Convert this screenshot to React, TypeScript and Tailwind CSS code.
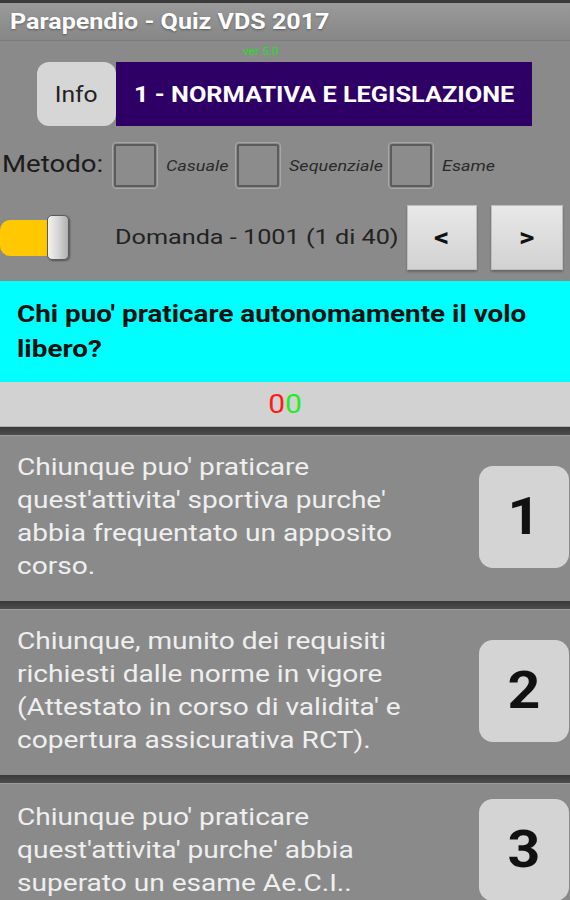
import React from "react";

const answers = [
  {
    n: "1",
    lines: ["Chiunque puo' praticare", "quest'attivita' sportiva purche'", "abbia frequentato un apposito", "corso."],
  },
  {
    n: "2",
    lines: ["Chiunque, munito dei requisiti", "richiesti dalle norme in vigore", "(Attestato in corso di validita' e", "copertura assicurativa RCT)."],
  },
  {
    n: "3",
    lines: ["Chiunque puo' praticare", "quest'attivita' purche' abbia", "superato un esame Ae.C.I.."],
  },
];

function Check() {
  return (
    <div className="w-[46px] h-[47px] shrink-0 rounded-[4px] border border-[#a8a8a8] p-[1px]">
      <div className="w-full h-full border-2 border-[#5c5c5c] rounded-[2px] bg-[#8c8c8c]" />
    </div>
  );
}

function Separator() {
  return (
    <div>
      <div className="h-[8px] bg-gradient-to-b from-[#3a3a3a] to-[#4c4c4c]" />
      <div className="h-[1px] bg-[#9c9c9c]" />
    </div>
  );
}

export default function App() {
  return (
    <div
      className="w-[570px] h-[900px] overflow-hidden bg-[#8a8a8a]"
      style={{ fontFamily: "Roboto, 'Noto Sans', sans-serif" }}
    >
      <div className="h-[3px] bg-[#3a3a3a]" />
      <div className="h-[38px] bg-gradient-to-b from-[#9a9a9a] to-[#878787] flex items-center pl-[10px] border-b border-[#7c7c7c]">
        <span className="inline-block origin-left scale-x-[1.14] text-white font-bold text-[22px] leading-none [text-shadow:0_1px_2px_rgba(0,0,0,0.35)]">
          Parapendio - Quiz VDS 2017
        </span>
      </div>
      <div className="h-[21px] flex items-center pl-[243px]">
        <span className="inline-block origin-left scale-x-[1.2] text-[10px] text-[#22e022] leading-none mt-[1px]">ver 5.0</span>
      </div>
      <div className="flex pl-[37px] h-[64px]">
        <div className="w-[79px] h-[64px] rounded-[12px] bg-[#d6d6d6] flex items-center justify-center text-[#222]">
          <span className="inline-block scale-x-[1.12] text-[22px]">Info</span>
        </div>
        <div className="w-[416px] h-[64px] bg-[#2e0066] flex items-center pl-[18px] text-white font-bold text-[22px]">
          <span className="inline-block origin-left scale-x-[1.15] whitespace-nowrap">1 - NORMATIVA E LEGISLAZIONE</span>
        </div>
      </div>
      <div className="flex items-center h-[47px] mt-[16px]">
        <span className="w-[110px] shrink-0 ml-[2px]">
          <span className="inline-block origin-left scale-x-[1.2] text-[23px] text-[#1c1c1c]">Metodo:</span>
        </span>
        <Check />
        <span className="ml-[8px] w-[69px] shrink-0">
          <span className="inline-block origin-left scale-x-[1.2] italic text-[15px] text-[#2a2a2a]">Casuale</span>
        </span>
        <Check />
        <span className="ml-[8px] w-[99px] shrink-0">
          <span className="inline-block origin-left scale-x-[1.2] italic text-[15px] text-[#2a2a2a]">Sequenziale</span>
        </span>
        <Check />
        <span className="ml-[8px]">
          <span className="inline-block origin-left scale-x-[1.2] italic text-[15px] text-[#2a2a2a]">Esame</span>
        </span>
      </div>
      <div className="flex items-center h-[65px] mt-[16px]">
        <div className="relative w-[70px] h-[45px] flex items-center shrink-0">
          <div className="w-[52px] h-[36px] bg-[#ffc800] rounded-l-[10px]" />
          <div className="absolute left-[47px] top-0 w-[22px] h-[45px] rounded-[5px] border border-[#5a5a5a] bg-gradient-to-r from-[#f2f2f2] via-[#d6d6d6] to-[#b0b0b0] shadow-[1px_1px_2px_rgba(0,0,0,0.4)]" />
        </div>
        <span className="ml-[45px] w-[292px] shrink-0">
          <span className="inline-block origin-left scale-x-[1.2] text-[21px] text-[#222] whitespace-nowrap">
            Domanda - 1001 (1 di 40)
          </span>
        </span>
        <div className="w-[70px] h-[65px] shrink-0 bg-gradient-to-b from-[#e8e8e8] to-[#d2d2d2] border border-[#bdbdbd] shadow-[0_2px_2px_rgba(0,0,0,0.25)] flex items-center justify-center text-[26px] font-bold text-[#111]">
          <span className="inline-block scale-x-[1.15]">&lt;</span>
        </div>
        <div className="w-[72px] h-[65px] shrink-0 ml-[14px] bg-gradient-to-b from-[#e8e8e8] to-[#d2d2d2] border border-[#bdbdbd] shadow-[0_2px_2px_rgba(0,0,0,0.25)] flex items-center justify-center text-[26px] font-bold text-[#111]">
          <span className="inline-block scale-x-[1.15]">&gt;</span>
        </div>
      </div>
      <div className="mt-[11px] h-[101px] bg-[#00ffff] px-[17px] pt-[16px]">
        <div className="text-[23px] leading-[35px] font-bold text-[#111]">
          <div className="origin-left scale-x-[1.21] whitespace-nowrap">Chi puo' praticare autonomamente il volo</div>
          <div className="origin-left scale-x-[1.21] whitespace-nowrap">libero?</div>
        </div>
      </div>
      <div className="h-[44px] bg-[#d2d2d2] flex items-center justify-center text-[25px] leading-none">
        <span className="inline-block scale-x-[1.2]">
          <span className="text-[#ff1a1a]">0</span>
          <span className="text-[#22ee22]">0</span>
        </span>
      </div>
      <div className="h-[1px] bg-[#b0b0b0]" />
      <Separator />
      {answers.map((a, i) => (
        <React.Fragment key={a.n}>
          {i > 0 && <Separator />}
          <div className="flex items-center pt-[15px] pb-[18px]">
            <div className="ml-[17px] text-[24px] leading-[33px] text-[#efefef]">
              {a.lines.map((l) => (
                <div key={l} className="origin-left scale-x-[1.17] whitespace-nowrap">
                  {l}
                </div>
              ))}
            </div>
            <div className="ml-auto mr-[1px] w-[90px] h-[102px] shrink-0 rounded-[14px] bg-[#d4d4d4] flex items-center justify-center text-[52px] font-bold text-[#111] leading-none">
              <span className="inline-block scale-x-[1.1]">{a.n}</span>
            </div>
          </div>
        </React.Fragment>
      ))}
    </div>
  );
}
